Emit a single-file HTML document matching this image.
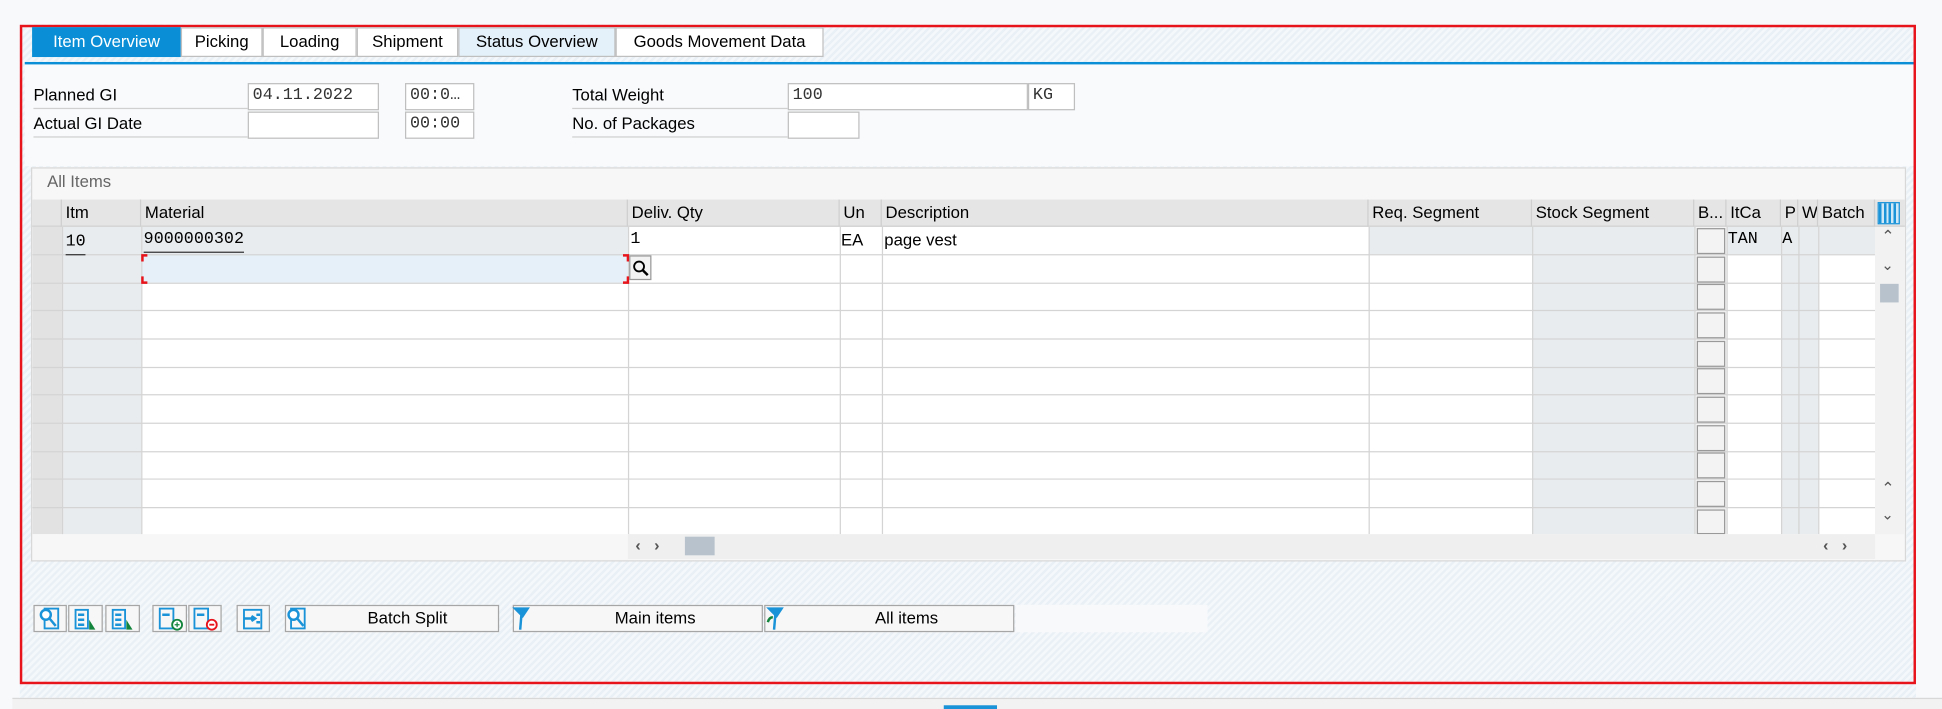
<!DOCTYPE html>
<html><head><meta charset="utf-8"><style>
html,body{margin:0;padding:0;width:1942px;height:709px;overflow:hidden;background:#f7f9fb;font-family:"Liberation Sans",Arial,sans-serif;}
#w{position:absolute;left:0;top:0;width:1568px;height:572px;transform:scale(1.23852,1.2395);transform-origin:0 0;font-size:13px;color:#000;}
.a{position:absolute;box-sizing:border-box;}
.hatch{background:repeating-linear-gradient(135deg,#eaf1f6 0 2px,#f5f8fb 2px 4px);}
.tab{position:absolute;top:22px;height:24px;border:1px solid #bfbfbf;background:#fff;line-height:22px;text-align:center;font-size:13.5px;box-sizing:border-box;}
.lbl{position:absolute;font-size:13.5px;border-bottom:1px solid #d0d0d0;height:22px;line-height:22px;box-sizing:border-box;}
.fld{position:absolute;height:22px;border:1px solid #bfbfbf;background:#fff;box-sizing:border-box;font-family:"Liberation Mono",monospace;font-size:13.5px;line-height:20px;padding-left:3px;color:#333;}
.mono{font-family:"Liberation Mono",monospace;}
.hc{position:absolute;top:161px;height:22px;line-height:22px;font-size:13.5px;padding-left:3px;box-sizing:border-box;border-right:1px solid #cfcfcf;}
.btn{position:absolute;top:488px;height:22px;border:1px solid #a6a6a6;background:#f7f7f7;box-sizing:border-box;font-size:13.5px;line-height:20px;text-align:center;}
</style></head><body><div id="w">
<div class="a hatch" style="left:16px;top:20px;width:1531px;height:543px"></div>
<div class="a" style="left:10px;top:563px;width:1558px;height:9px;background:#f2f2f2;border-top:1px solid #d8d8d8"></div>
<div class="a" style="left:762px;top:569px;width:43px;height:3px;background:#1a93d8"></div>
<div class="a" style="left:16px;top:20px;width:1531px;height:532px;border:2px solid #e8141c"></div>
<div class="a" style="left:20px;top:50px;width:1525px;height:2px;background:#0a8fd6"></div>
<div class="a" style="left:20px;top:52px;width:1525px;height:82px;background:#f8fafc"></div>
<div class="tab" style="left:26px;width:120px;background:#0a8fd6;color:#fff;border-color:#0a8fd6">Item Overview</div>
<div class="tab" style="left:146px;width:66px">Picking</div>
<div class="tab" style="left:212px;width:76px">Loading</div>
<div class="tab" style="left:288px;width:82px">Shipment</div>
<div class="tab" style="left:370px;width:127px;background:#e5f1fa">Status Overview</div>
<div class="tab" style="left:497px;width:168px">Goods Movement Data</div>
<div class="lbl" style="left:27px;top:66px;width:173px">Planned GI</div>
<div class="fld" style="left:200px;top:67px;width:106px">04.11.2022</div>
<div class="fld" style="left:327px;top:67px;width:56px">00:0…</div>
<div class="lbl" style="left:27px;top:89px;width:173px">Actual GI Date</div>
<div class="fld" style="left:200px;top:90px;width:106px"></div>
<div class="fld" style="left:327px;top:90px;width:56px">00:00</div>
<div class="lbl" style="left:462px;top:66px;width:174px">Total Weight</div>
<div class="fld" style="left:636px;top:67px;width:194px">100</div>
<div class="fld" style="left:830px;top:67px;width:38px">KG</div>
<div class="lbl" style="left:462px;top:89px;width:174px">No. of Packages</div>
<div class="fld" style="left:636px;top:90px;width:58px"></div>
<div class="a" style="left:25px;top:135px;width:1514px;height:318px;border:1px solid #d8d8d8;background:#f7f7f7"></div>
<div class="a" style="left:38px;top:139px;font-size:13.5px;color:#666">All Items</div>
<div class="a" style="left:26px;top:161px;width:1512px;height:22px;background:#e5e5e5;border-bottom:1px solid #cfcfcf"></div>
<div class="hc" style="left:26px;width:24px"></div>
<div class="hc" style="left:50px;width:64px">Itm</div>
<div class="hc" style="left:114px;width:393px">Material</div>
<div class="hc" style="left:507px;width:171px">Deliv. Qty</div>
<div class="hc" style="left:678px;width:34px">Un</div>
<div class="hc" style="left:712px;width:393px">Description</div>
<div class="hc" style="left:1105px;width:132px">Req. Segment</div>
<div class="hc" style="left:1237px;width:131px">Stock Segment</div>
<div class="hc" style="left:1368px;width:26px">B...</div>
<div class="hc" style="left:1394px;width:44px">ItCa</div>
<div class="hc" style="left:1438px;width:14px;overflow:hidden">P</div>
<div class="hc" style="left:1452px;width:16px;overflow:hidden">W</div>
<div class="hc" style="left:1468px;width:46px">Batch</div>
<div class="a" style="left:1516px;top:163px;width:18px;height:18px;border:1px solid #1a93d8;background:repeating-linear-gradient(90deg,#1a93d8 0 2px,#cfe8f7 2px 4px)"></div>
<svg class="a" style="left:26px;top:183px" width="1488" height="248">
<rect x="0" y="0" width="1488" height="248" fill="#fff"/>
<rect x="0" y="0" width="24" height="248" fill="#e2e2e2"/>
<rect x="24" y="0" width="64" height="248" fill="#e9ecef"/>
<rect x="88" y="0" width="393" height="22" fill="#e9ecef"/>
<rect x="88" y="22" width="393" height="23" fill="#e5f0f8"/>
<rect x="1079" y="0" width="132" height="22" fill="#e9ecef"/>
<rect x="1211" y="0" width="131" height="248" fill="#e9ecef"/>
<rect x="1342" y="0" width="26" height="248" fill="#f3f3f3"/>
<rect x="1368" y="0" width="44" height="22" fill="#e9ecef"/>
<rect x="1412" y="0" width="30" height="248" fill="#e9ecef"/>
<rect x="1442" y="0" width="46" height="22" fill="#e9ecef"/>
<g stroke="#d4d4d4" stroke-width="1">
<line x1="0" x2="1488" y1="22.5" y2="22.5"/><line x1="0" x2="1488" y1="45.5" y2="45.5"/><line x1="0" x2="1488" y1="67.5" y2="67.5"/><line x1="0" x2="1488" y1="90.5" y2="90.5"/><line x1="0" x2="1488" y1="113.5" y2="113.5"/><line x1="0" x2="1488" y1="135.5" y2="135.5"/><line x1="0" x2="1488" y1="158.5" y2="158.5"/><line x1="0" x2="1488" y1="181.5" y2="181.5"/><line x1="0" x2="1488" y1="203.5" y2="203.5"/><line x1="0" x2="1488" y1="226.5" y2="226.5"/>
<line y1="0" y2="248" x1="24.5" x2="24.5"/><line y1="0" y2="248" x1="88.5" x2="88.5"/><line y1="0" y2="248" x1="481.5" x2="481.5"/><line y1="0" y2="248" x1="652.5" x2="652.5"/><line y1="0" y2="248" x1="686.5" x2="686.5"/><line y1="0" y2="248" x1="1079.5" x2="1079.5"/><line y1="0" y2="248" x1="1211.5" x2="1211.5"/><line y1="0" y2="248" x1="1342.5" x2="1342.5"/><line y1="0" y2="248" x1="1368.5" x2="1368.5"/><line y1="0" y2="248" x1="1412.5" x2="1412.5"/><line y1="0" y2="248" x1="1426.5" x2="1426.5"/><line y1="0" y2="248" x1="1442.5" x2="1442.5"/>
</g>
<g fill="none" stroke="#999"><rect x="1344.5" y="1.5" width="22" height="20"/><rect x="1344.5" y="24.5" width="22" height="20"/><rect x="1344.5" y="46.5" width="22" height="20"/><rect x="1344.5" y="69.5" width="22" height="20"/><rect x="1344.5" y="92.5" width="22" height="20"/><rect x="1344.5" y="114.5" width="22" height="20"/><rect x="1344.5" y="137.5" width="22" height="20"/><rect x="1344.5" y="160.5" width="22" height="20"/><rect x="1344.5" y="182.5" width="22" height="20"/><rect x="1344.5" y="205.5" width="22" height="20"/><rect x="1344.5" y="228.5" width="22" height="19"/></g>
<path d="M89 28v-5h4M477 23h4v5M89 40v5h4M477 45h4v-5" stroke="#e8141c" stroke-width="2" fill="none"/>
<rect x="482.5" y="23.5" width="17" height="19" fill="#f3f3f3" stroke="#999"/>
<circle cx="490" cy="32" r="4" fill="none" stroke="#000" stroke-width="1.5"/><line x1="493" y1="35" x2="497" y2="39" stroke="#000" stroke-width="2"/>
</svg>
<div class="a" style="left:1514px;top:183px;width:24px;height:248px;background:#f2f2f2"></div>
<div class="a" style="left:1519px;top:183px;font-size:13px;color:#555">&#8963;</div>
<div class="a" style="left:1519px;top:207px;font-size:12px;color:#555">&#8964;</div>
<div class="a" style="left:1518px;top:229px;width:15px;height:15px;background:#b8c2cc"></div>
<div class="a" style="left:1519px;top:386px;font-size:13px;color:#555">&#8963;</div>
<div class="a" style="left:1519px;top:408px;font-size:12px;color:#555">&#8964;</div>
<div class="a" style="left:53px;top:185px;font-size:13.5px;line-height:18px;border-bottom:1px solid #333" ><span class="mono">10</span></div>
<div class="a mono" style="left:116px;top:185px;font-size:13.5px;line-height:18px;border-bottom:1px solid #333">9000000302</div>
<div class="a mono" style="left:509px;top:185px;font-size:13.5px;line-height:18px">1</div>
<div class="a" style="left:679px;top:185px;font-size:13.5px;line-height:18px">EA</div>
<div class="a" style="left:714px;top:185px;font-size:13.5px;line-height:18px">page vest</div>
<div class="a mono" style="left:1395px;top:185px;font-size:13.5px;line-height:18px">TAN</div>
<div class="a mono" style="left:1439px;top:185px;font-size:13.5px;line-height:18px">A</div>
<div class="a" style="left:507px;top:431px;width:1007px;height:20px;background:#efefef"></div>
<div class="a" style="left:513px;top:432px;font-size:13px;color:#555;font-weight:bold">&#8249;&#160;&#160;&#160;&#8250;</div>
<div class="a" style="left:553px;top:433px;width:24px;height:15px;background:#b8c2cc"></div>
<div class="a" style="left:1472px;top:432px;font-size:13px;color:#555;font-weight:bold">&#8249;&#160;&#160;&#160;&#8250;</div>
<div class="a" style="left:820px;top:488px;width:155px;height:22px;background:#f7f9fb"></div>
<div class="btn" style="left:27px;width:27px"></div>
<div class="btn" style="left:55px;width:28px"></div>
<div class="btn" style="left:85px;width:28px"></div>
<div class="btn" style="left:123px;width:28px"></div>
<div class="btn" style="left:152px;width:27px"></div>
<div class="btn" style="left:191px;width:27px"></div>
<div class="btn" style="left:230px;width:173px;padding-left:25px">Batch Split</div>
<div class="btn" style="left:414px;width:202px;padding-left:28px">Main items</div>
<div class="btn" style="left:617px;width:202px;padding-left:28px">All items</div>
<svg class="a" style="left:0;top:488px" width="660" height="22" fill="none" stroke="#1a93d8" stroke-width="2">
<g><rect x="36" y="3" width="11" height="16" stroke-width="1.5"/><circle cx="37" cy="8" r="4" fill="#fff"/><line x1="40" y1="11" x2="45" y2="17"/></g>
<g><rect x="61" y="4" width="10" height="15" stroke-width="1.5"/><path d="M63 8h5M63 12h5M63 16h5"/><path d="M72 12l5 8h-5z" fill="#13843c" stroke="none"/></g>
<g><rect x="91" y="4" width="10" height="15" stroke-width="1.5"/><path d="M93 8h5M93 12h5M93 16h5"/><path d="M102 12l5 8h-5z" fill="#13843c" stroke="none"/></g>
<g><rect x="129" y="3" width="11" height="16" stroke-width="1.5"/><path d="M131 8h6"/><circle cx="143" cy="16" r="4" stroke="#13843c" stroke-width="1.5" fill="#fff"/><path d="M141 16h4M143 14v4" stroke="#13843c" stroke-width="1"/></g>
<g><rect x="157" y="3" width="11" height="16" stroke-width="1.5"/><path d="M159 8h6"/><circle cx="171" cy="16" r="4" stroke="#e8141c" stroke-width="1.5" fill="#fff"/><path d="M169 16h4" stroke="#e8141c" stroke-width="1.5"/></g>
<g><path d="M197 4h14v15h-14z" stroke-width="1.5"/><path d="M197 11h8M203 9l3 2-3 2"/><path d="M207 8h3M207 14h3"/></g>
<g><rect x="235" y="3" width="11" height="16" stroke-width="1.5"/><circle cx="237" cy="8" r="4" fill="#fff"/><line x1="240" y1="11" x2="245" y2="17"/></g>
<g><path d="M416 3h10l-4 6z" fill="#1a93d8"/><line x1="421" y1="8" x2="420" y2="20"/></g>
<g><path d="M621 3h10l-4 6z" fill="#1a93d8"/><line x1="626" y1="8" x2="625" y2="20"/><path d="M620 14q1-4 4-4" stroke="#13843c"/></g>
</svg>
</div></body></html>
